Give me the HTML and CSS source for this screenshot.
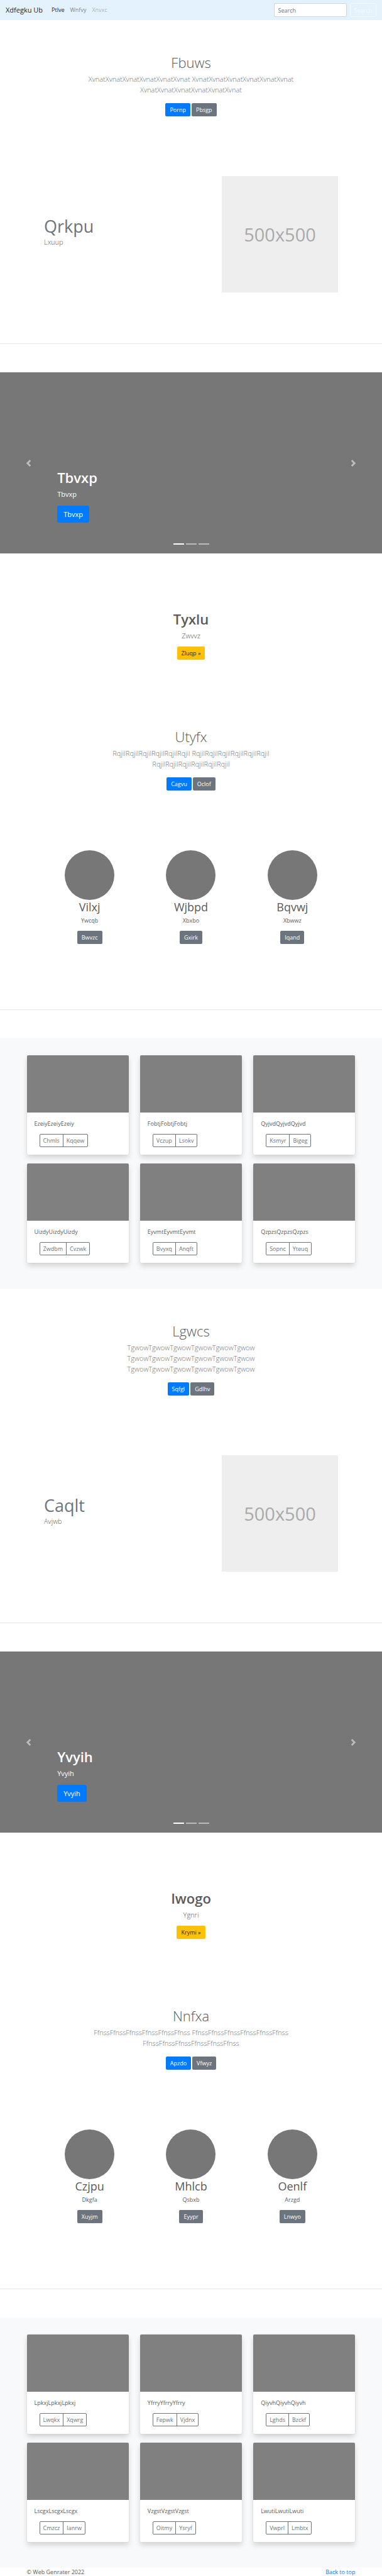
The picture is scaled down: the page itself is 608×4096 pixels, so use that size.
FILE: index.html
```
<!DOCTYPE html>
<html lang="en">
<head>
<meta charset="utf-8">
<meta name="viewport" content="width=device-width, initial-scale=1">
<title>Xdfegku Ub</title>
<link rel="stylesheet" href="styles.css">
</head>
<body>
<header class="navbar" id="top">
  <a class="brand" href="#">Xdfegku Ub</a>
  <nav class="nav-links">
    <a class="active" href="#">Ptlve</a>
    <a href="#">Wnfvy</a>
    <a class="disabled" href="#">Xnvxc</a>
  </nav>
  <form class="search">
    <input type="search" placeholder="Search" aria-label="Search">
    <button class="btn btn-outline-light" type="button">Search</button>
  </form>
</header>

<main>
  <section class="hero">
    <h1>Fbuws</h1>
    <p class="lead">XvnatXvnatXvnatXvnatXvnatXvnat XvnatXvnatXvnatXvnatXvnatXvnat XvnatXvnatXvnatXvnatXvnatXvnat</p>
    <div class="actions"><a class="btn btn-primary" href="#">Pornp</a><a class="btn btn-secondary" href="#">Pbsgp</a></div>
  </section>

  <section class="feature">
    <div class="feature-text">
      <h2>Qrkpu</h2>
      <p>Lxuup</p>
    </div>
    <div class="placeholder">500x500</div>
  </section>
  <hr>

  <section class="carousel">
    <button class="control" type="button" aria-label="Previous"><svg viewBox="0 0 8 8"><path d="M5.25 0l-4 4 4 4 1.500-1.500-2.500-2.500 2.500-2.500-1.500-1.500z"/></svg></button>
    <div class="caption">
      <h2>Tbvxp</h2>
      <p>Tbvxp</p>
      <a class="btn btn-primary btn-lg" href="#">Tbvxp</a>
    </div>
    <button class="control" type="button" aria-label="Next"><svg viewBox="0 0 8 8"><path d="M2.750 0l-1.500 1.500 2.500 2.500-2.500 2.500 1.500 1.500 4-4-4-4z"/></svg></button>
    <div class="indicators"><span class="on"></span><span></span><span></span></div>
  </section>

  <section class="callout">
    <h2>Tyxlu</h2>
    <p>Zwvvz</p>
    <a class="btn btn-warning" href="#">Zluqp »</a>
  </section>

  <section class="hero">
    <h1>Utyfx</h1>
    <p class="lead">RqjilRqjilRqjilRqjilRqjilRqjil RqjilRqjilRqjilRqjilRqjilRqjil RqjilRqjilRqjilRqjilRqjilRqjil</p>
    <div class="actions"><a class="btn btn-primary" href="#">Cagvu</a><a class="btn btn-secondary" href="#">Oclof</a></div>
  </section>

  <section class="people">
    <div class="person"><div class="avatar"></div><h2>Vilxj</h2><p>Ywcqb</p><a class="btn btn-secondary" href="#">Bwvzc</a></div>
    <div class="person"><div class="avatar"></div><h2>Wjbpd</h2><p>Xbxbo</p><a class="btn btn-secondary" href="#">Gxirk</a></div>
    <div class="person"><div class="avatar"></div><h2>Bqvwj</h2><p>Xbwwz</p><a class="btn btn-secondary" href="#">Iqand</a></div>
  </section>
  <hr>

  <section class="album">
    <article class="card"><div class="thumb"></div><div class="card-body"><p>EzeiyEzeiyEzeiy</p><div class="group"><button type="button">Chmls</button><button type="button">Kqqew</button></div></div></article>
    <article class="card"><div class="thumb"></div><div class="card-body"><p>FobtjFobtjFobtj</p><div class="group"><button type="button">Vczup</button><button type="button">Lsokv</button></div></div></article>
    <article class="card"><div class="thumb"></div><div class="card-body"><p>QyjvdQyjvdQyjvd</p><div class="group"><button type="button">Ksmyr</button><button type="button">Bigeg</button></div></div></article>
    <article class="card"><div class="thumb"></div><div class="card-body"><p>UizdyUizdyUizdy</p><div class="group"><button type="button">Zwdbm</button><button type="button">Cvzwk</button></div></div></article>
    <article class="card"><div class="thumb"></div><div class="card-body"><p>EyvmtEyvmtEyvmt</p><div class="group"><button type="button">Bvyxq</button><button type="button">Anqft</button></div></div></article>
    <article class="card"><div class="thumb"></div><div class="card-body"><p>QzpzsQzpzsQzpzs</p><div class="group"><button type="button">Sopnc</button><button type="button">Yteuq</button></div></div></article>
  </section>

  <section class="hero">
    <h1>Lgwcs</h1>
    <p class="lead">TgwowTgwowTgwowTgwowTgwowTgwow TgwowTgwowTgwowTgwowTgwowTgwow TgwowTgwowTgwowTgwowTgwowTgwow</p>
    <div class="actions"><a class="btn btn-primary" href="#">Sqfgl</a><a class="btn btn-secondary" href="#">Gdlhv</a></div>
  </section>

  <section class="feature">
    <div class="feature-text">
      <h2>Caqlt</h2>
      <p>Avjwb</p>
    </div>
    <div class="placeholder">500x500</div>
  </section>
  <hr>

  <section class="carousel">
    <button class="control" type="button" aria-label="Previous"><svg viewBox="0 0 8 8"><path d="M5.250 0l-4 4 4 4 1.500-1.500-2.500-2.500 2.500-2.500-1.500-1.500z"/></svg></button>
    <div class="caption">
      <h2>Yvyih</h2>
      <p>Yvyih</p>
      <a class="btn btn-primary btn-lg" href="#">Yvyih</a>
    </div>
    <button class="control" type="button" aria-label="Next"><svg viewBox="0 0 8 8"><path d="M2.750 0l-1.500 1.500 2.500 2.500-2.500 2.500 1.500 1.500 4-4-4-4z"/></svg></button>
    <div class="indicators"><span class="on"></span><span></span><span></span></div>
  </section>

  <section class="callout">
    <h2>Iwogo</h2>
    <p>Ygnri</p>
    <a class="btn btn-warning" href="#">Krymi »</a>
  </section>

  <section class="hero">
    <h1>Nnfxa</h1>
    <p class="lead">FfnssFfnssFfnssFfnssFfnssFfnss FfnssFfnssFfnssFfnssFfnssFfnss FfnssFfnssFfnssFfnssFfnssFfnss</p>
    <div class="actions"><a class="btn btn-primary" href="#">Apzdo</a><a class="btn btn-secondary" href="#">Vfwyz</a></div>
  </section>

  <section class="people">
    <div class="person"><div class="avatar"></div><h2>Czjpu</h2><p>Dkgfa</p><a class="btn btn-secondary" href="#">Xuyjm</a></div>
    <div class="person"><div class="avatar"></div><h2>Mhlcb</h2><p>Qsbxb</p><a class="btn btn-secondary" href="#">Eyypr</a></div>
    <div class="person"><div class="avatar"></div><h2>Oenlf</h2><p>Arzgd</p><a class="btn btn-secondary" href="#">Lnwyo</a></div>
  </section>
  <hr>

  <section class="album">
    <article class="card"><div class="thumb"></div><div class="card-body"><p>LpkxjLpkxjLpkxj</p><div class="group"><button type="button">Lwqkx</button><button type="button">Xqwrg</button></div></div></article>
    <article class="card"><div class="thumb"></div><div class="card-body"><p>YfrryYfrryYfrry</p><div class="group"><button type="button">Fepwk</button><button type="button">Vjdnx</button></div></div></article>
    <article class="card"><div class="thumb"></div><div class="card-body"><p>QiyvhQiyvhQiyvh</p><div class="group"><button type="button">Lghds</button><button type="button">Bzckf</button></div></div></article>
    <article class="card"><div class="thumb"></div><div class="card-body"><p>LscgxLscgxLscgx</p><div class="group"><button type="button">Cmzcz</button><button type="button">Ianrw</button></div></div></article>
    <article class="card"><div class="thumb"></div><div class="card-body"><p>VzgstVzgstVzgst</p><div class="group"><button type="button">Oitmy</button><button type="button">Ysryf</button></div></div></article>
    <article class="card"><div class="thumb"></div><div class="card-body"><p>LwutiLwutiLwuti</p><div class="group"><button type="button">Vwprl</button><button type="button">Lmbtx</button></div></div></article>
  </section>
</main>

<footer class="footer">
  <span>© Web Genrater 2022</span>
  <a href="#top">Back to top</a>
</footer>
</body>
</html>
```
FILE: styles.css
```
* { box-sizing: border-box; }

body {
  margin: 0;
  background: #fff;
  color: #5a5a5a;
  font-family: "Open Sans", "Noto Sans", sans-serif;
  font-size: 9px;
  line-height: 14px;
}

h1, h2, p { margin: 0; }
a { text-decoration: none; }
button, input { font: inherit; }

hr {
  height: 1px;
  margin: 0 0 45px;
  border: 0;
  background: #e5e5e5;
}

/* Navigation bar */
.navbar {
  display: flex;
  align-items: center;
  gap: 14px;
  padding: 5px 9px;
  background: #e3f2fd;
}
.brand { color: rgba(0, 0, 0, .9); font-size: 11px; }
.nav-links { display: flex; gap: 9px; }
.nav-links a { color: rgba(0, 0, 0, .5); }
.nav-links .active { color: rgba(0, 0, 0, .9); }
.nav-links .disabled { color: rgba(0, 0, 0, .3); }
.search { display: flex; gap: 5px; margin-left: auto; }
.search input {
  width: 116px;
  height: 22px;
  padding: 3px 6px;
  border: 1px solid #ced4da;
  border-radius: 2px;
  background: #fff;
  color: #495057;
}
.search input::placeholder { color: #6c757d; opacity: 1; }

/* Buttons */
.btn {
  display: inline-block;
  padding: 3px 6px;
  border: 1px solid transparent;
  border-radius: 2px;
  line-height: 13px;
  text-align: center;
}
.btn-primary { background: #007bff; color: #fff; }
.btn-secondary { background: #6c757d; color: #fff; }
.btn-warning { background: #ffc107; color: #212529; }
.btn-outline-light { background: transparent; border-color: #f8f9fa; color: #f8f9fa; }
.btn-lg { padding: 5px 9px; border-radius: 3px; font-size: 11px; line-height: 15px; }

/* Centered intro */
.hero {
  display: flex;
  flex-direction: column;
  align-items: center;
  padding: 54px 16px 95px;
  text-align: center;
}
.hero h1 { font-size: 22px; font-weight: 300; line-height: 27px; }
.lead {
  max-width: 352px;
  margin: 4px 0 13px;
  color: #6c757d;
  font-size: 11px;
  font-weight: 300;
  line-height: 17px;
}
.actions { display: flex; gap: 2px; }

/* Text beside a placeholder image */
.feature {
  display: flex;
  align-items: center;
  justify-content: space-between;
  padding: 0 70px 81px;
}
.feature-text { padding-bottom: 9px; }
.feature h2 { color: #6c757d; font-size: 27px; font-weight: 400; line-height: 33px; }
.feature p { font-size: 11px; font-weight: 300; line-height: 17px; }
.placeholder {
  display: flex;
  align-items: center;
  justify-content: center;
  width: 185px;
  aspect-ratio: 1;
  background: #eee;
  color: #aaa;
  font-size: 29px;
}

/* Carousel */
.carousel {
  position: relative;
  display: flex;
  align-items: stretch;
  height: 288px;
  background: #777;
  color: #fff;
}
.control {
  display: flex;
  align-items: center;
  justify-content: center;
  width: 15%;
  padding: 0;
  border: 0;
  background: none;
  opacity: .5;
}
.control svg { width: 11px; height: 11px; fill: #fff; }
.caption { flex: 1; align-self: flex-end; padding-bottom: 49px; }
.caption h2 { font-size: 22px; font-weight: 600; line-height: 27px; }
.caption p { margin: 4px 0 10px; font-size: 11px; line-height: 17px; }
.indicators {
  position: absolute;
  right: 0;
  bottom: 14px;
  left: 0;
  display: flex;
  justify-content: center;
  gap: 3px;
}
.indicators span { width: 17px; height: 2px; background: #fff; opacity: .5; }
.indicators .on { opacity: 1; }

/* Callout */
.callout { padding: 91px 16px 55px; text-align: center; }
.callout h2 { font-size: 22px; font-weight: 600; line-height: 27px; }
.callout p { margin: 4px 0 9px; font-size: 11px; font-weight: 300; line-height: 17px; }

/* Profiles */
.people {
  display: grid;
  grid-template-columns: repeat(3, 1fr);
  padding: 0 62px 104px;
  text-align: center;
}
.avatar { width: 79px; height: 79px; margin: 0 auto; border-radius: 50%; background: #777; }
.person h2 { font-size: 18px; font-weight: 400; line-height: 22px; }
.person p { margin: 4px 0 9px; }

/* Card album */
.album {
  display: grid;
  grid-template-columns: repeat(3, 1fr);
  gap: 14px 18px;
  padding: 27px 7% 41px;
  background: #f8f9fa;
}
.card {
  overflow: hidden;
  border-radius: 2px;
  background: #fff;
  box-shadow: 0 0 1px rgba(0, 0, 0, .2), 0 5px 9px rgba(0, 0, 0, .15);
}
.thumb { height: 91px; background: #808080; }
.card-body { padding: 11px 12px 12px; }
.card-body p { margin-bottom: 9px; }
.group { display: flex; margin-left: 8px; }
.group button {
  padding: 3px 5px;
  border: 1px solid #6c757d;
  background: transparent;
  color: #6c757d;
  line-height: 13px;
}
.group button:first-child { border-radius: 2px 0 0 2px; }
.group button:last-child { margin-left: -1px; border-radius: 0 2px 2px 0; }

/* Footer */
.footer { display: flex; justify-content: space-between; padding: 0 7%; line-height: 13px; }
.footer a { color: #007bff; }
```
